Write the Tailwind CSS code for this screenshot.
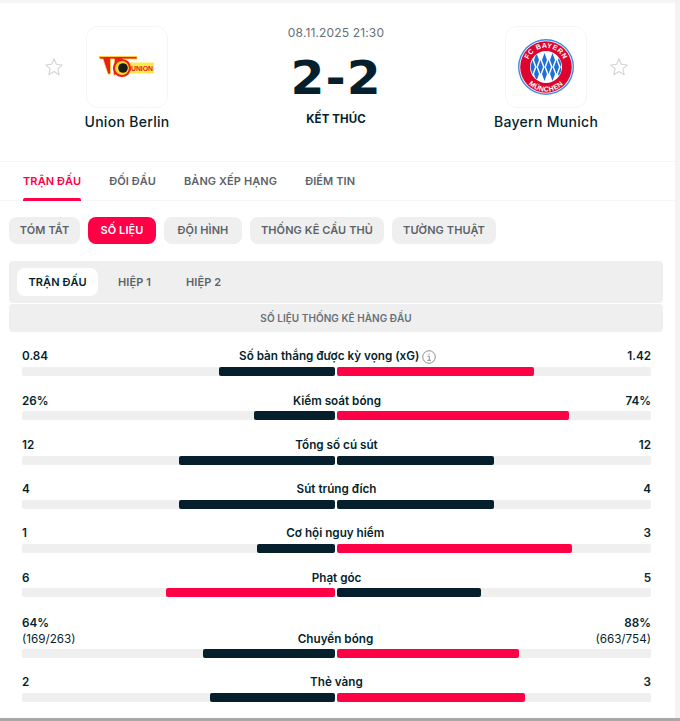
<!doctype html>
<html><head><meta charset="utf-8"><script src="https://cdn.jsdelivr.net/npm/@tailwindcss/browser@4"></script></head>
<body class="bg-[#f3f3f3] font-['Inter','Noto_Sans',sans-serif] text-[#061f2c]">
<div class="h-[721px] flex flex-col overflow-hidden">
<div class="w-[675px] flex-1 bg-white flex flex-col border-t-[3px] border-[#f5f5f5] min-h-0">
  <section class="h-[158px] flex items-start shrink-0">
    <div class="w-[252px] flex pt-[23px] items-start">
      <svg class="ml-[44px] mt-[31px] w-[20px] h-[20px]" viewBox="0 0 24 24" fill="none" stroke="#d4d4d4" stroke-width="1.3" stroke-linejoin="round"><path d="M12 2.2l2.900 6.600 7.100.7-5.400 4.700 1.600 7-6.200-3.700-6.200 3.700 1.600-7L2 9.500l7.100-.7z"/></svg>
      <div class="ml-[22px] w-[82px] flex flex-col items-center">
        <div class="w-[82px] h-[82px] rounded-xl border border-[#f5f5f5] flex items-center justify-center">
          <svg width="58" height="24" viewBox="0 0 58 24">
            <rect x="32" y="7.500" width="24" height="11" fill="#ffe94a"/>
            <path d="M1 1.500H39V4H24L23 6H19L17.500 20H15.500L16.500 4H12.500V19H10L5 4H2z" fill="#e8201c" stroke="#ffd92e" stroke-width=".8"/>
            <circle cx="24" cy="13" r="8" fill="#ffd92e" stroke="#e8201c" stroke-width="2.200"/>
            <circle cx="25" cy="13" r="4.800" fill="#1c1a12"/>
            <text x="33" y="16" font-size="8" font-weight="700" fill="#d9201c" textLength="22" lengthAdjust="spacingAndGlyphs" font-family="Liberation Sans">UNION</text>
          </svg>
        </div>
        <div class="mt-[5px] text-[14px] leading-[18px] tracking-[0.3px] whitespace-nowrap font-medium">Union Berlin</div>
      </div>
    </div>
    <div class="w-[168px] flex flex-col items-center pt-[22px]">
      <div class="text-xs leading-4 text-[#666f76] tracking-[0.15px]">08.11.2025 21:30</div>
      <div class="mt-[15px] h-[44px] text-[46px] leading-[44px] font-bold font-['DejaVu_Sans',sans-serif] scale-x-[1.06] tracking-[1px] whitespace-nowrap">2-2</div>
      <div class="mt-[11px] text-[11.500px] leading-4 font-bold tracking-[0.1px]">KẾT THÚC</div>
    </div>
    <div class="flex-1 flex pt-[23px] items-start">
      <div class="ml-[85px] w-[82px] flex flex-col items-center">
        <div class="w-[82px] h-[82px] rounded-xl border border-[#f5f5f5] flex items-center justify-center">
          <svg width="56" height="56" viewBox="0 0 56 56">
            <defs>
              <path id="bt" d="M8.800 28a19.200 19.200 0 0 1 38.400 0"/>
              <path id="bb" d="M3.500 28a24.500 24.500 0 0 0 49 0"/>
              <clipPath id="bc"><circle cx="28" cy="28" r="15.500"/></clipPath>
            </defs>
            <circle cx="28" cy="28" r="28" fill="#3f86e8"/>
            <circle cx="28" cy="28" r="26.600" fill="#fff"/>
            <circle cx="28" cy="28" r="25.800" fill="#dc052d"/>
            <circle cx="28" cy="28" r="16" fill="#fff"/>
            <g clip-path="url(#bc)" fill="#1f6fd6">
              <path id="d" d="M12 28l2.500-7 2.500 7-2.500 7zM20 28l2.500-7 2.500 7-2.500 7zM28 28l2.500-7 2.500 7-2.500 7zM36 28l2.500-7 2.500 7-2.500 7zM16 21l2.500-7 2.500 7-2.500 7zM24 21l2.500-7 2.500 7-2.500 7zM32 21l2.500-7 2.500 7-2.500 7zM40 21l2.500-7 2.500 7-2.500 7zM16 35l2.500-7 2.500 7-2.500 7zM24 35l2.500-7 2.500 7-2.500 7zM32 35l2.500-7 2.500 7-2.500 7zM40 35l2.500-7 2.500 7-2.500 7z"/>
            </g>
            <text font-size="7" font-weight="700" fill="#fff" font-family="Liberation Sans" letter-spacing=".5"><textPath href="#bt" startOffset="50%" text-anchor="middle">FC BAYERN</textPath></text>
            <text font-size="7" font-weight="700" fill="#fff" font-family="Liberation Sans" letter-spacing=".4"><textPath href="#bb" startOffset="50%" text-anchor="middle">MÜNCHEN</textPath></text>
          </svg>
        </div>
        <div class="mt-[5px] text-[14px] leading-[18px] tracking-[0.3px] whitespace-nowrap font-medium">Bayern Munich</div>
      </div>
      <svg class="ml-[22px] mt-[31px] w-[20px] h-[20px]" viewBox="0 0 24 24" fill="none" stroke="#d4d4d4" stroke-width="1.3" stroke-linejoin="round"><path d="M12 2.200l2.900 6.600 7.100.7-5.400 4.700 1.600 7-6.200-3.700-6.200 3.700 1.600-7L2 9.500l7.100-.7z"/></svg>
    </div>
  </section>
  <nav class="h-[40px] shrink-0 border-y border-[#f5f5f5] flex pl-[23px] gap-[28px] text-[11px] font-semibold tracking-[0.1px] text-[#5c6368]">
    <a class="relative h-full flex items-center text-[#ff0046]">TRẬN ĐẤU<span class="absolute left-0 right-0 bottom-[-1px] h-[3px] bg-[#ff0046] rounded-t-[2px]"></span></a>
    <a class="flex items-center">ĐỐI ĐẦU</a>
    <a class="flex items-center">BẢNG XẾP HẠNG</a>
    <a class="flex items-center">ĐIỂM TIN</a>
  </nav>
  <div class="mt-[16px] ml-[9px] flex gap-2 text-[11px] font-semibold tracking-[0.1px] text-[#5c6368]">
    <span class="h-[27px] w-[71px] rounded-lg bg-[#efefef] flex items-center justify-center">TÓM TẮT</span>
    <span class="h-[27px] w-[68px] rounded-lg bg-[#ff0046] text-white flex items-center justify-center">SỐ LIỆU</span>
    <span class="h-[27px] w-[78px] rounded-lg bg-[#efefef] flex items-center justify-center">ĐỘI HÌNH</span>
    <span class="h-[27px] w-[134px] rounded-lg bg-[#efefef] flex items-center justify-center">THỐNG KÊ CẦU THỦ</span>
    <span class="h-[27px] w-[104px] rounded-lg bg-[#efefef] flex items-center justify-center">TƯỜNG THUẬT</span>
  </div>
  <div class="mt-[17px] mx-[9px] w-[654px] h-[42px] rounded bg-[#efefef] flex items-center pl-2 text-[11px] font-semibold tracking-[0.1px] text-[#5c6368]">
    <span class="w-[81px] h-[28px] bg-white rounded-lg text-[#061f2c] flex items-center justify-center">TRẬN ĐẤU</span>
    <span class="ml-[20px] w-[35px] whitespace-nowrap">HIỆP 1</span>
    <span class="ml-[33px] whitespace-nowrap">HIỆP 2</span>
  </div>
  <div class="mt-[1px] mx-[9px] w-[654px] h-[28px] rounded bg-[#efefef] flex items-center justify-center text-[10px] font-semibold tracking-[0.05px] text-[#666f76]">SỐ LIỆU THỐNG KÊ HÀNG ĐẦU</div>

  <div class="mx-[22px] w-[629px] mt-[15px] flex flex-col text-[11.700px] font-semibold">
    <div class="h-[44.300px]">
      <div class="h-[20px] flex justify-between items-center"><span>0.84</span><span class="flex items-center gap-[3px]">Số bàn thắng được kỳ vọng (xG)<svg width="14" height="14" viewBox="0 0 14 14" fill="none" stroke="#8a8f93"><circle cx="7" cy="7" r="6.300"/><path d="M5.500 6.200H7.300V10.300M5.300 10.300H9M7 3.500V4.700"/></svg></span><span>1.42</span></div>
      <div class="h-[9px] flex gap-[2px]"><div class="w-[313px] flex justify-end rounded-[2px] bg-[#efefef]"><div class="w-[116px] bg-[#061f2c] rounded-[2px]"></div></div><div class="flex-1 rounded-[2px] bg-[#efefef]"><div class="w-[197px] h-full bg-[#ff0046] rounded-[2px]"></div></div></div>
    </div>
    <div class="h-[44.300px]">
      <div class="h-[20px] flex justify-between items-center"><span>26%</span><span>Kiểm soát bóng</span><span>74%</span></div>
      <div class="h-[9px] flex gap-[2px]"><div class="w-[313px] flex justify-end rounded-[2px] bg-[#efefef]"><div class="w-[81px] bg-[#061f2c] rounded-[2px]"></div></div><div class="flex-1 rounded-[2px] bg-[#efefef]"><div class="w-[232px] h-full bg-[#ff0046] rounded-[2px]"></div></div></div>
    </div>
    <div class="h-[44.300px]">
      <div class="h-[20px] flex justify-between items-center"><span>12</span><span>Tổng số cú sút</span><span>12</span></div>
      <div class="h-[9px] flex gap-[2px]"><div class="w-[313px] flex justify-end rounded-[2px] bg-[#efefef]"><div class="w-[156px] bg-[#061f2c] rounded-[2px]"></div></div><div class="flex-1 rounded-[2px] bg-[#efefef]"><div class="w-[157px] h-full bg-[#061f2c] rounded-[2px]"></div></div></div>
    </div>
    <div class="h-[44.300px]">
      <div class="h-[20px] flex justify-between items-center"><span>4</span><span>Sút trúng đích</span><span>4</span></div>
      <div class="h-[9px] flex gap-[2px]"><div class="w-[313px] flex justify-end rounded-[2px] bg-[#efefef]"><div class="w-[156px] bg-[#061f2c] rounded-[2px]"></div></div><div class="flex-1 rounded-[2px] bg-[#efefef]"><div class="w-[157px] h-full bg-[#061f2c] rounded-[2px]"></div></div></div>
    </div>
    <div class="h-[44.300px]">
      <div class="h-[20px] flex justify-between items-center"><span>1</span><span>Cơ hội nguy hiểm</span><span>3</span></div>
      <div class="h-[9px] flex gap-[2px]"><div class="w-[313px] flex justify-end rounded-[2px] bg-[#efefef]"><div class="w-[78px] bg-[#061f2c] rounded-[2px]"></div></div><div class="flex-1 rounded-[2px] bg-[#efefef]"><div class="w-[235px] h-full bg-[#ff0046] rounded-[2px]"></div></div></div>
    </div>
    <div class="h-[44.300px]">
      <div class="h-[20px] flex justify-between items-center"><span>6</span><span>Phạt góc</span><span>5</span></div>
      <div class="h-[9px] flex gap-[2px]"><div class="w-[313px] flex justify-end rounded-[2px] bg-[#efefef]"><div class="w-[169px] bg-[#ff0046] rounded-[2px]"></div></div><div class="flex-1 rounded-[2px] bg-[#efefef]"><div class="w-[144px] h-full bg-[#061f2c] rounded-[2px]"></div></div></div>
    </div>
    <div class="h-[60.500px] mt-[-0.500px]">
      <div class="h-[36px] pb-[1px] flex justify-between items-end"><span class="leading-4">64%<br><span class="font-normal">(169/263)</span></span><span class="leading-4">Chuyền bóng</span><span class="leading-4 text-right">88%<br><span class="font-normal">(663/754)</span></span></div>
      <div class="mt-[1px] h-[9px] flex gap-[2px]"><div class="w-[313px] flex justify-end rounded-[2px] bg-[#efefef]"><div class="w-[132px] bg-[#061f2c] rounded-[2px]"></div></div><div class="flex-1 rounded-[2px] bg-[#efefef]"><div class="w-[182px] h-full bg-[#ff0046] rounded-[2px]"></div></div></div>
    </div>
    <div class="h-[32px]">
      <div class="h-[20px] flex justify-between items-center"><span>2</span><span>Thẻ vàng</span><span>3</span></div>
      <div class="h-[9px] flex gap-[2px]"><div class="w-[313px] flex justify-end rounded-[2px] bg-[#efefef]"><div class="w-[125px] bg-[#061f2c] rounded-[2px]"></div></div><div class="flex-1 rounded-[2px] bg-[#efefef]"><div class="w-[188px] h-full bg-[#ff0046] rounded-[2px]"></div></div></div>
    </div>
  </div>
</div>
<div class="h-[3px] bg-[#a8a8a8] shrink-0"></div>
</div>
</body></html>
